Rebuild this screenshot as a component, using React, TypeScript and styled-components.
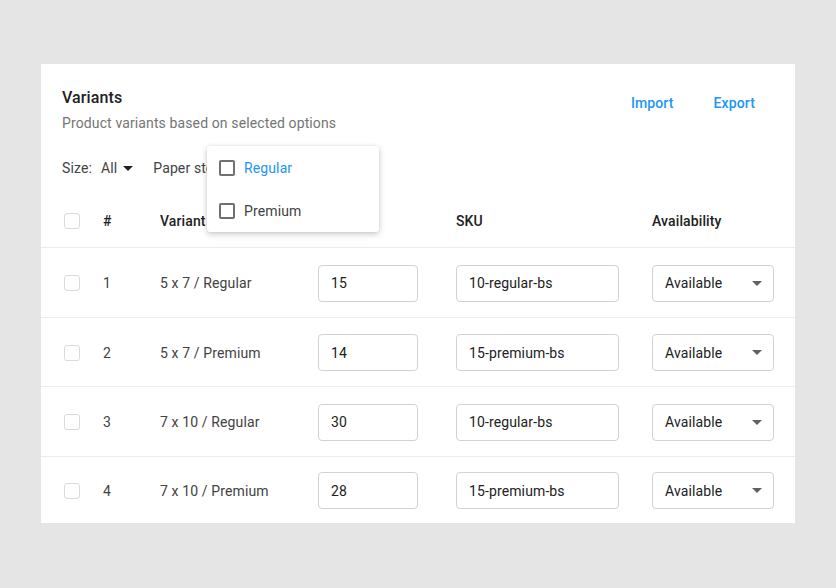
import React from 'react';
import styled, { createGlobalStyle } from 'styled-components';

const GlobalStyle = createGlobalStyle`
  body {
    margin: 0;
    background: #e5e5e5;
    font-family: Roboto, 'Liberation Sans', sans-serif;
    letter-spacing: 0.12px;
  }
`;

const Page = styled.div`
  padding: 64px 41px;
`;

const Card = styled.div`
  position: relative;
  width: 754px;
  background: #fff;
`;

const Header = styled.div`
  display: flex;
  justify-content: space-between;
  align-items: flex-start;
  padding: 22px 24px 0 21px;
`;

const Title = styled.h2`
  margin: 0;
  font-size: 16px;
  line-height: 24px;
  font-weight: 500;
  color: #212121;
`;

const Subtitle = styled.p`
  margin: 3px 0 0;
  font-size: 14px;
  line-height: 20px;
  color: #757575;
`;

const Actions = styled.div`
  display: flex;
  gap: 8px;
  margin-top: -1px;
`;

const TextButton = styled.button`
  height: 36px;
  padding: 0 16px;
  border: none;
  background: none;
  font-family: inherit;
  font-size: 14px;
  font-weight: 500;
  letter-spacing: 0.12px;
  color: #2196f3;
  cursor: pointer;
`;

const FilterBar = styled.div`
  display: flex;
  align-items: center;
  height: 52px;
  margin-top: 9px;
  padding-left: 21px;
  gap: 20px;
  font-size: 14px;
  color: #424242;
`;

const Filter = styled.div`
  display: flex;
  align-items: center;
`;

const FilterValue = styled.span`
  margin-left: 9px;
  display: inline-flex;
  align-items: center;
  gap: 6px;
  color: #424242;
`;

const Caret = styled.span<{ $color?: string }>`
  width: 0;
  height: 0;
  border-left: 5px solid transparent;
  border-right: 5px solid transparent;
  border-top: 5px solid ${(p) => p.$color ?? '#212121'};
`;

const Row = styled.div<{ $head?: boolean }>`
  display: grid;
  grid-template-columns: 39px 57px 158px 138px 196px 122px;
  align-items: center;
  height: ${(p) => (p.$head ? '54px' : '69.5px')};
  padding: ${(p) => (p.$head ? '1px' : '2px')} 21px 0 23px;
  border-bottom: 1px solid #ececec;
  box-sizing: border-box;
  font-size: 14px;
  color: ${(p) => (p.$head ? '#212121' : '#424242')};
  font-weight: ${(p) => (p.$head ? 500 : 400)};

  &:last-child {
    border-bottom: none;
    height: 66px;
  }
`;

const Box = styled.span`
  width: 16px;
  height: 16px;
  box-sizing: border-box;
  border: 1px solid #dadada;
  border-radius: 3px;
  background: #fff;
`;

const Field = styled.div<{ $width: number }>`
  display: flex;
  align-items: center;
  justify-content: space-between;
  width: ${(p) => p.$width}px;
  height: 37px;
  box-sizing: border-box;
  padding: 0 11px 0 12px;
  border: 1px solid #d2d2d2;
  border-radius: 4px;
  font-size: 14px;
  color: #212121;
`;

const Menu = styled.div`
  position: absolute;
  left: 166px;
  top: 82px;
  width: 172px;
  background: #fff;
  border-radius: 3px;
  box-shadow: 0 2px 6px rgba(0, 0, 0, 0.22), 0 0 2px rgba(0, 0, 0, 0.08);
  z-index: 2;
`;

const MenuItem = styled.div<{ $active?: boolean }>`
  display: flex;
  align-items: center;
  gap: 9px;
  height: 43px;
  padding-left: 12px;
  font-size: 14px;
  color: ${(p) => (p.$active ? '#2196f3' : '#424242')};
`;

const MenuBox = styled.span`
  width: 16px;
  height: 16px;
  box-sizing: border-box;
  border: 2px solid #707070;
  border-radius: 2px;
`;

const rows = [
  { n: 1, name: '5 x 7 / Regular', price: '15', sku: '10-regular-bs' },
  { n: 2, name: '5 x 7 / Premium', price: '14', sku: '15-premium-bs' },
  { n: 3, name: '7 x 10 / Regular', price: '30', sku: '10-regular-bs' },
  { n: 4, name: '7 x 10 / Premium', price: '28', sku: '15-premium-bs' },
];

export default function App() {
  return (
    <Page>
      <GlobalStyle />
      <Card>
        <Header>
          <div>
            <Title>Variants</Title>
            <Subtitle>Product variants based on selected options</Subtitle>
          </div>
          <Actions>
            <TextButton>Import</TextButton>
            <TextButton>Export</TextButton>
          </Actions>
        </Header>
        <FilterBar>
          <Filter>
            Size:
            <FilterValue>
              All <Caret />
            </FilterValue>
          </Filter>
          <Filter>
            Paper stock:
            <FilterValue>
              All <Caret />
            </FilterValue>
          </Filter>
        </FilterBar>
        <div>
          <Row $head>
            <Box />
            <span>#</span>
            <span>Variant</span>
            <span>Price</span>
            <span>SKU</span>
            <span>Availability</span>
          </Row>
          {rows.map((r) => (
            <Row key={r.n}>
              <Box />
              <span>{r.n}</span>
              <span>{r.name}</span>
              <Field $width={100}>{r.price}</Field>
              <Field $width={163}>{r.sku}</Field>
              <Field $width={122}>
                Available <Caret $color="#616161" />
              </Field>
            </Row>
          ))}
        </div>
        <Menu>
          <MenuItem $active>
            <MenuBox />
            Regular
          </MenuItem>
          <MenuItem>
            <MenuBox />
            Premium
          </MenuItem>
        </Menu>
      </Card>
    </Page>
  );
}
